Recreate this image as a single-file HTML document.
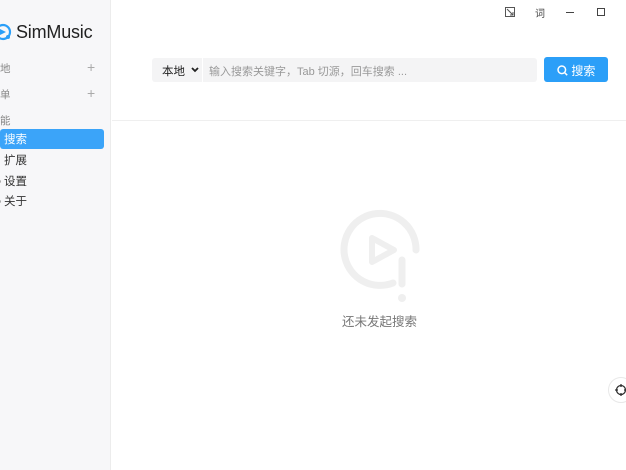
<!DOCTYPE html>
<html><head><meta charset="utf-8"><style>
*{margin:0;padding:0;box-sizing:border-box}
body{width:626px;height:470px;overflow:hidden;background:#fff;font-family:"Liberation Sans","Noto Sans CJK SC",sans-serif;position:relative;color:#222}
.side{position:absolute;left:0;top:0;width:111px;height:470px;background:#f7f7f9;border-right:1px solid #ececec}
.logo{position:absolute;left:16px;top:22px;font-size:18px;color:#222;letter-spacing:-0.2px}
.sec{position:absolute;left:0;font-size:10.5px;color:#888}
.plus{position:absolute;left:87px;font-size:14px;color:#aaa;font-weight:300}
.item{position:absolute;left:4px;font-size:11.5px;color:#333}
.act{position:absolute;left:0;top:129px;width:104px;height:20px;background:#3ba4f9;border-radius:3px;color:#fff;font-size:11.5px;padding:2px 0 0 4px}
.dot{position:absolute;left:-2px;width:3px;height:3px;border-radius:2px;background:#aaa}
.top{position:absolute;top:5px;font-size:11px;color:#444}
.bar{position:absolute;left:152px;top:58px;width:385px;height:24px;background:#f4f4f5;border-radius:3px}
.sel{position:absolute;left:152px;top:58px;width:50px;height:24px;font-size:11.5px;color:#222;padding:5px 0 0 10px}
.ph{position:absolute;left:209px;top:63px;font-size:11px;color:#999}
.btn{position:absolute;left:544px;top:57px;width:64px;height:25px;background:#2b9ff8;border-radius:3px;color:#fff;font-size:12px;padding:5px 0 0 13px}
.hr{position:absolute;left:112px;top:120px;right:0;height:1px;background:#efefef}
.empty{position:absolute;left:342px;top:311px;font-size:12.5px;color:#777}
.fl{position:absolute;left:608px;top:377px;width:26px;height:26px;border-radius:13px;border:1px solid #e8e8e8;background:#fff}
</style></head><body>
<div class="side">
<svg style="position:absolute;left:-6px;top:23px" width="18" height="18" viewBox="0 0 18 18"><circle cx="9" cy="9" r="7" fill="none" stroke="#2b9ff8" stroke-width="2.2"/><path d="M6 6l6 3-6 3z" fill="#2b9ff8"/><circle cx="14" cy="14" r="2" fill="#2b9ff8"/></svg>
<div class="logo">SimMusic</div>
<div class="sec" style="top:61px">地</div><div class="plus" style="top:59px">+</div>
<div class="sec" style="top:87px">单</div><div class="plus" style="top:85px">+</div>
<div class="sec" style="top:113px">能</div>
<div class="act">搜索</div>
<div class="item" style="top:152px">扩展</div>
<div class="item" style="top:173px">设置</div><div class="dot" style="top:180px"></div>
<div class="item" style="top:193px">关于</div><div class="dot" style="top:200px"></div>
</div>
<svg style="position:absolute;left:505px;top:7px" width="10" height="10" viewBox="0 0 10 10"><rect x="0.5" y="0.5" width="9" height="9" fill="none" stroke="#555"/><path d="M2 2l6 6M8 5v3H5" stroke="#555" fill="none"/></svg>
<div class="top" style="left:535px;font-size:10px">词</div>
<div style="position:absolute;left:566px;top:12px;width:8px;height:1px;background:#444"></div>
<div style="position:absolute;left:597px;top:8px;width:8px;height:8px;border:1.3px solid #444"></div>
<div class="bar"></div>
<div class="sel">本地</div>
<svg style="position:absolute;left:191px;top:67px" width="8" height="6" viewBox="0 0 8 6"><path d="M1 1l3 3 3-3" fill="none" stroke="#222" stroke-width="1.8"/></svg>
<div style="position:absolute;left:202px;top:58px;width:1px;height:24px;background:#fff"></div>
<div class="ph">输入搜索关键字，Tab 切源，回车搜索 ...</div>
<div class="btn"><svg width="11" height="11" viewBox="0 0 11 11" style="vertical-align:-1px"><circle cx="4.8" cy="4.8" r="3.8" fill="none" stroke="#fff" stroke-width="1.5"/><path d="M7.6 7.6l2.6 2.6" stroke="#fff" stroke-width="1.5"/></svg> 搜索</div>
<div class="hr"></div>
<svg style="position:absolute;left:338px;top:208px" width="86" height="96" viewBox="0 0 86 96"><path d="M55 75 A36 36 0 1 1 78 42" fill="none" stroke="#efefef" stroke-width="7" stroke-linecap="round"/><path d="M34 30 L56 42 L34 54 Z" fill="none" stroke="#efefef" stroke-width="6" stroke-linejoin="round"/><path d="M64 52 V76" stroke="#efefef" stroke-width="7" stroke-linecap="round"/><circle cx="64" cy="90" r="4" fill="#efefef"/></svg>
<div class="empty">还未发起搜索</div>
<div class="fl"><svg style="position:absolute;left:6px;top:6px" width="12" height="12" viewBox="0 0 12 12"><circle cx="6" cy="6" r="4.5" fill="none" stroke="#333" stroke-width="1.3"/><path d="M6 0v3M6 9v3M0 6h3M9 6h3" stroke="#333" stroke-width="1.3"/></svg></div>
</body></html>
